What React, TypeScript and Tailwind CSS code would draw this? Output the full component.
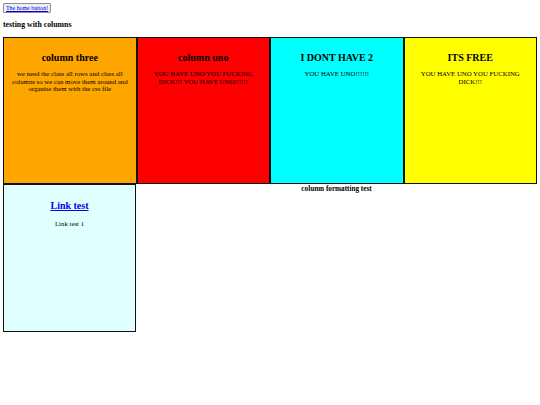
const columns = [
  {
    title: "column three",
    text: "we need the class all rows and class all columns so we can move them around and organise them with the css file",
    bg: "bg-[#ffa500]",
  },
  {
    title: "column uno",
    text: "YOU HAVE UNO YOU FUCKING DICK!!! YOU HAVE UNO!!!!!!",
    bg: "bg-[#ff0000]",
  },
  { title: "I DONT HAVE 2", text: "YOU HAVE UNO!!!!!!", bg: "bg-[#00ffff]" },
  { title: "ITS FREE", text: "YOU HAVE UNO YOU FUCKING DICK!!!", bg: "bg-[#ffff00]" },
];

export default function App() {
  return (
    <div className="min-h-[405px] w-[540px] bg-white p-[3px] text-black leading-[8px] font-['Liberation_Serif',serif]">
      <button className="block h-[10px] border border-[#8f8f8f] bg-[#efefef] px-[2px] text-[5.9px] leading-[8px] rounded-[1px]">
        <a href="#" className="text-[#0000ee] underline">
          The home button!
        </a>
      </button>

      <h4 className="mt-[7px] mb-[8px] text-[7.8px] font-bold leading-[9px]">testing with columns</h4>

      <div className="grid grid-cols-4">
        {columns.map((col) => (
          <div
            key={col.title}
            className={`h-[147px] border border-[#111] ${col.bg} px-[7px] pt-[6px] text-center`}
          >
            <h2 className="mt-[8px] mb-[7px] text-[10px] font-bold leading-[11px]">{col.title}</h2>
            <p className="text-[6.8px] leading-[7.6px]">{col.text}</p>
          </div>
        ))}
      </div>

      <div className="flex">
        <div className="h-[148px] w-[133px] border border-[#111] bg-[#e0ffff] px-[7px] pt-[7px] text-center">
          <h2 className="mt-[8px] mb-[9px] text-[10px] font-bold leading-[11px]">
            <a href="#" className="text-[#0000ee] underline">
              Link test
            </a>
          </h2>
          <p className="text-[6.8px] leading-[7.6px]">Link test 1</p>
        </div>
        <h4 className="flex-1 pt-[1px] text-center text-[7.2px] font-bold leading-[8px]">
          column formatting test
        </h4>
      </div>
    </div>
  );
}
